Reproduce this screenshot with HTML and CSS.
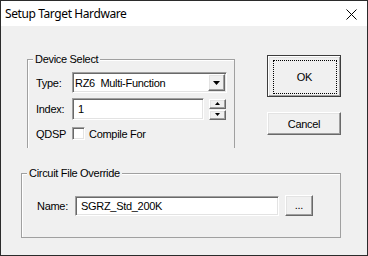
FILE: index.html
```html
<!DOCTYPE html>
<html>
<head>
   <title>Setup Target Hardware</title>
   <link rel="stylesheet" href="styles.css">
</head>
<body>
<div class="dialog">
   <div class="titlebar">
      <span class="title">Setup Target Hardware</span>
      <svg class="close" width="11" height="11" viewBox="0 0 11 11">
         <path d="M0.5 0.5 L10.5 10.5 M10.5 0.5 L0.5 10.5" stroke="#000" stroke-width="1" fill="none"/>
      </svg>
   </div>
   <div class="client">
      <div class="top">
         <div class="group device">
            <span class="legend">Device Select</span>
            <div class="inner">
               <div class="row r1">
                  <span class="lbl">Type:</span>
                  <div class="combo">
                     <span class="val">RZ6  Multi-Function</span>
                     <span class="drop">
                        <svg width="7" height="4" viewBox="0 0 7 4"><path d="M0 0 H7 L3.5 4 Z" fill="#000"/></svg>
                     </span>
                  </div>
               </div>
               <div class="row r2">
                  <span class="lbl">Index:</span>
                  <div class="edit index">1</div>
                  <div class="spin">
                     <span class="sbtn"><svg width="5" height="3" viewBox="0 0 5 3"><path d="M0 3 H5 L2.5 0 Z" fill="#000"/></svg></span>
                     <span class="sbtn"><svg width="5" height="3" viewBox="0 0 5 3"><path d="M0 0 H5 L2.5 3 Z" fill="#000"/></svg></span>
                  </div>
               </div>
               <div class="row r3">
                  <span class="lbl">QDSP</span>
                  <span class="check"></span>
                  <span class="chktext">Compile For</span>
               </div>
            </div>
         </div>
         <div class="buttons">
            <div class="btn ok"><span class="focus">OK</span></div>
            <div class="btn cancel">Cancel</div>
         </div>
      </div>
      <div class="group circuit">
         <span class="legend">Circuit File Override</span>
         <div class="inner">
            <div class="row">
               <span class="lbl">Name:</span>
               <div class="edit name">SGRZ_Std_200K</div>
               <div class="btn browse">...</div>
            </div>
         </div>
      </div>
   </div>
</div>
</body>
</html>
```

FILE: styles.css
```css
body {
      margin: 0;
      font-family: "Liberation Sans", Arial, sans-serif;
      font-size: 11px;
      letter-spacing: -0.3px;
      color: #000;
}

.dialog {
      width: 368px;
      height: 256px;
      box-sizing: border-box;
      border: 1px solid #2b2b2b;
      background: #f0f0f0;
      display: flex;
      flex-direction: column;
}

.titlebar {
      height: 25px;
      background: #fff;
      display: flex;
      align-items: center;
      justify-content: space-between;
      padding: 0 10px 0 4px;
}

.title {
      font-family: "Noto Sans", sans-serif;
      font-size: 12px;
      letter-spacing: -0.4px;
}

.close {
      margin-top: 1px;
}

.client {
      flex: 1;
      padding-top: 29px;
}

.top {
      display: flex;
      align-items: flex-start;
}

/* group boxes */
.group {
      border: 1px solid #a0a0a0;
      box-shadow: inset 1px 1px 0 #fff;
      box-sizing: border-box;
}

.legend {
      display: block;
      width: fit-content;
      height: 13px;
      line-height: 13px;
      margin: -7px 0 -6px 5px;
      padding: 0 2px;
      background: #f0f0f0;
}

.row {
      display: flex;
      align-items: center;
}

.device {
      margin: 4px 0 0 26px;
      width: 208px;
      height: 89px;
      border-bottom: none;
}

.device .inner {
      padding: 12px 0 0 8px;
}

.device .lbl {
      width: 36px;
}

.r1 {
      height: 21px;
      margin-bottom: 5px;
}

.r2 {
      height: 22px;
      margin-bottom: 6px;
}

.r3 {
      height: 15px;
}

/* sunken controls */
.edit, .combo, .check {
      box-sizing: border-box;
      background: #fff;
      border: 1px solid;
      border-color: #a0a0a0 #fff #fff #a0a0a0;
      box-shadow: inset 1px 1px 0 #696969, inset -1px -1px 0 #e3e3e3;
}

.combo {
      width: 155px;
      height: 21px;
      display: flex;
      align-items: center;
      justify-content: space-between;
      padding: 0 1px 0 2px;
}

.val {
      white-space: pre;
}

.drop, .sbtn, .btn {
      box-sizing: border-box;
      background: #f0f0f0;
      border: 1px solid;
      border-color: #fff #696969 #696969 #fff;
      box-shadow: inset -1px -1px 0 #a0a0a0, inset 1px 1px 0 #e3e3e3;
      display: flex;
      align-items: center;
      justify-content: center;
}

.drop {
      width: 17px;
      height: 17px;
}

.edit {
      height: 22px;
      line-height: 20px;
      padding-left: 5px;
}

.index {
      width: 132px;
}

.spin {
      margin-left: 5px;
      display: flex;
      flex-direction: column;
      gap: 1px;
}

.sbtn {
      width: 17px;
      height: 10px;
}

.check {
      width: 13px;
      height: 13px;
}

.chktext {
      margin-left: 4px;
}

/* push buttons */
.buttons {
      margin-left: 32px;
      display: flex;
      flex-direction: column;
      gap: 15px;
}

.btn {
      width: 74px;
      height: 23px;
}

.ok {
      height: 42px;
      outline: 1px solid #3c3c3c;
      outline-offset: -1px;
      border-width: 2px 1px 1px 2px;
}

.focus {
      width: 64px;
      height: 34px;
      border: 1px dotted #000;
      box-sizing: border-box;
      display: flex;
      align-items: center;
      justify-content: center;
}

.circuit {
      margin: 25px 0 0 20px;
      width: 320px;
      height: 65px;
}

.circuit .inner {
      padding: 21px 0 0 15px;
}

.circuit .lbl {
      width: 38px;
}

.name {
      width: 204px;
      height: 20px;
      line-height: 18px;
}

.browse {
      margin-left: 6px;
      width: 28px;
      height: 21px;
      padding-bottom: 2px;
}
```
